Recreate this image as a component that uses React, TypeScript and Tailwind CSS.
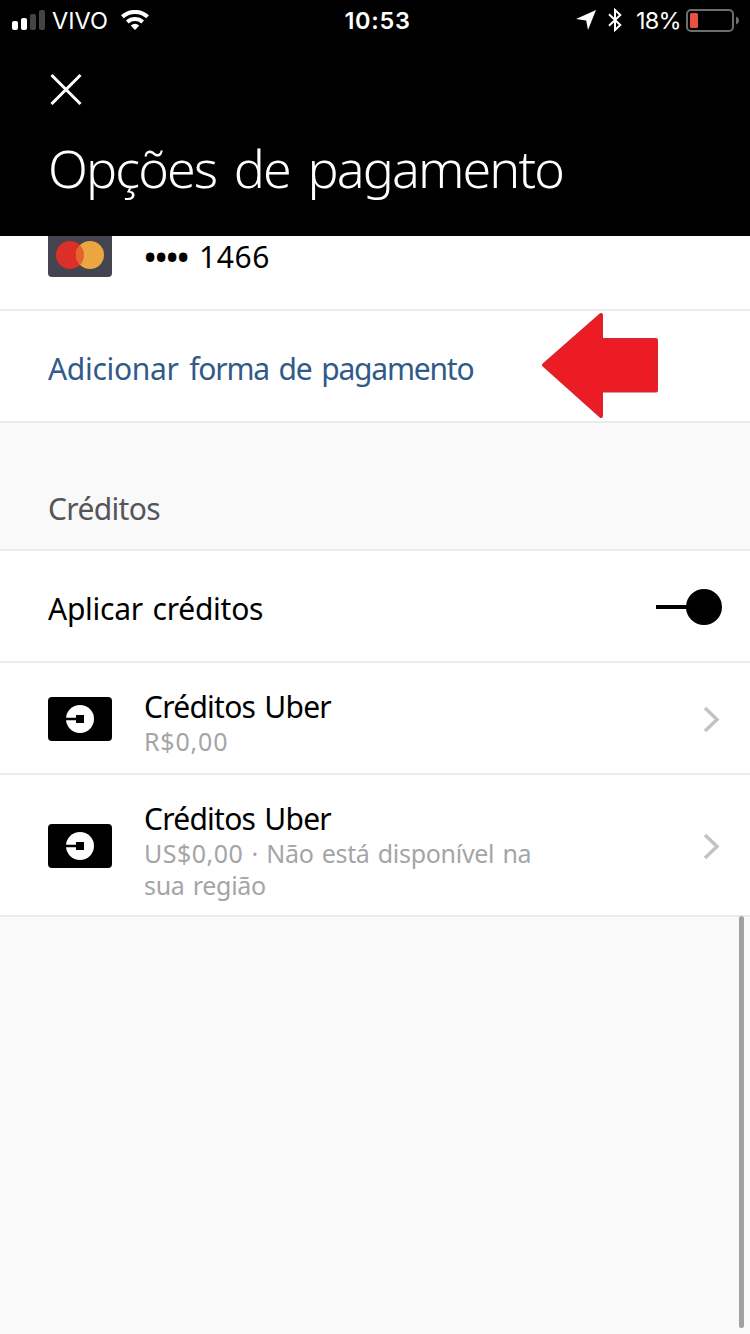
import type { ReactNode } from "react";

function StatusBar() {
  return (
    <div className="grid h-10 grid-cols-3 items-center font-['Inter',sans-serif] text-[23.5px] leading-[38px] text-white">
      <div className="flex items-center pl-3">
        <svg width="34" height="20" viewBox="0 0 34 20">
          <rect x="0" y="11" width="6" height="9" rx="2" fill="#fff" />
          <rect x="9" y="8" width="6" height="12" rx="2" fill="#fff" />
          <rect x="18" y="4" width="6" height="16" rx="2" fill="#444" />
          <rect x="27" y="0" width="6" height="20" rx="2" fill="#444" />
        </svg>
        <span className="ml-1.5 w-[56px] pt-0.5">VIVO</span>
        <svg className="ml-[13px]" width="28" height="20" viewBox="0 0 28 20" fill="none" stroke="#fff" strokeWidth="4">
          <path d="M1.4 6.8a18.6 18.6 0 0 1 25.2 0" />
          <path d="M6.3 12a11.6 11.6 0 0 1 15.4 0" />
          <path d="M9.7 15.4a6.8 6.8 0 0 1 8.6 0L14 20z" fill="#fff" stroke="none" />
        </svg>
      </div>
      <div className="pt-0.5 pl-[5px] text-center font-semibold tracking-[0.7px]">10:53</div>
      <div className="flex items-center justify-end pr-[11px]">
        <svg width="20" height="20" viewBox="0 0 20 20" fill="#fff">
          <path d="M20 0 12 20 10.2 10.400 0 9z" />
        </svg>
        <svg className="ml-3" width="14" height="24" viewBox="0 0 14 24" fill="none" stroke="#fff" strokeWidth="2">
          <path d="M1 6.2 12.3 17 7 22V2l5.3 5L1 17.8" />
        </svg>
        <span className="ml-[14px] w-[45px] pt-0.5 tracking-[-0.8px]">18%</span>
        <svg className="ml-[5px]" width="53" height="24" viewBox="0 0 53 24">
          <rect x="1" y="2" width="46" height="21" rx="4" fill="none" stroke="#6d6d6d" strokeWidth="2" />
          <rect x="4" y="5" width="8" height="15" rx="1.5" fill="#e8503f" />
          <path d="M50 8.5c4 1.5 4 6.500 0 8z" fill="#6d6d6d" />
        </svg>
      </div>
    </div>
  );
}

function Header() {
  return (
    <header className="h-[236px] bg-black text-white">
      <StatusBar />
      <div className="px-12 pt-[33px]">
        <svg className="ml-0.5" width="32" height="32" viewBox="0 0 32 32" stroke="#fff" strokeWidth="3">
          <path d="M1.500 2 30.500 31M30.500 2 1.500 31" />
        </svg>
        <h1 className="mt-[31px] text-[52px] leading-[64px] font-light tracking-[-1.9px] whitespace-nowrap [word-spacing:6px]">
          Opções de pagamento
        </h1>
      </div>
    </header>
  );
}

function CreditCard() {
  return (
    <svg className="shrink-0" width="64" height="44" viewBox="0 0 64 44">
      <rect width="64" height="44" rx="4" fill="#000" />
      <circle cx="32" cy="22" r="14" fill="#fff" />
      <path d="M17 20.800h11V18h8v8h-8v-2.800H17z" fill="#000" />
    </svg>
  );
}

function CreditRow({ className, children }: { className: string; children: ReactNode }) {
  return (
    <div className={`flex border-b-2 border-[#ebebeb] bg-white pl-12 ${className}`}>
      <div className="flex items-center pt-0.5">
        <CreditCard />
      </div>
      <div className="ml-8 w-[420px] pt-6 text-[25px] leading-8 tracking-[-0.3px] text-[#a5a5a8] [word-spacing:2px]">
        <p className="-mb-0.5 text-[30px] leading-10 tracking-[-0.75px] text-black">Créditos Uber</p>
        {children}
      </div>
      <div className="ml-auto flex items-center pt-0.5 pr-[30px]">
        <svg width="17" height="28" viewBox="0 0 17 28" fill="none" stroke="#c3c3c6" strokeWidth="3.500">
          <path d="M2 3 14 14.500 2 26" />
        </svg>
      </div>
    </div>
  );
}

export default function App() {
  return (
    <div className="relative h-[1334px] w-[750px] overflow-hidden bg-[#f9f9f9] font-['Noto_Sans',sans-serif] text-[30px] text-black">
      <Header />

      <div className="flex h-[75px] border-b-2 border-[#ebebeb] bg-white pl-12">
        <svg width="64" height="41" viewBox="0 0 64 41">
          <path d="M0 0h64v37a4 4 0 0 1-4 4H4a4 4 0 0 1-4-4z" fill="#444350" />
          <circle cx="22" cy="19" r="14" fill="#dc2f27" />
          <circle cx="42" cy="19" r="14" fill="#eba63f" />
          <path d="M32 9.200a14 14 0 0 1 0 19.600a14 14 0 0 1 0-19.600z" fill="#e5622f" />
        </svg>
        <div className="ml-8 flex pt-px leading-10">
          <span className="-ml-px w-[56px] text-[38px] leading-[39px] tracking-[-3.3px]">••••</span>
          <span className="tracking-[0.6px]">1466</span>
        </div>
      </div>

      <div className="flex h-[112px] items-center border-b-2 border-[#ebebeb] bg-white pl-12">
        <span className="w-[493px] pt-1 tracking-[-1.2px] whitespace-nowrap text-[#315a89] [word-spacing:3px]">
          <span className="tracking-[-0.3px]">Adicionar </span>forma de pagamento
        </span>
        <svg width="118" height="106" viewBox="0 0 118 106">
          <path
            d="M3 52 60 2v25h55v50.500H60v25.500z"
            fill="#ed1c24"
            stroke="#e31f28"
            strokeWidth="4"
            strokeLinejoin="round"
          />
        </svg>
      </div>

      <h2 className="flex h-[128px] items-end border-b-2 border-[#ebebeb] pb-5 pl-12 leading-10 tracking-[-0.65px] text-[#55555a]">
        Créditos
      </h2>

      <div className="flex h-[112px] items-center justify-between border-b-2 border-[#ebebeb] bg-white pr-7 pl-12">
        <span className="pt-1 tracking-[-0.25px] [word-spacing:2px]">Aplicar créditos</span>
        <div className="flex items-center pt-0.5">
          <div className="h-1 w-[31px] bg-black" />
          <div className="-ml-px size-9 rounded-full bg-black" />
        </div>
      </div>

      <CreditRow className="h-[112px]">
        <p className="tracking-[0.8px]">R$0,00</p>
      </CreditRow>
      <CreditRow className="h-[142px]">
        <p className="-mt-px whitespace-nowrap">
          <span className="tracking-[0.5px]">US$0,00</span> · Não está disponível na
        </p>
        <p>sua região</p>
      </CreditRow>

      <div className="absolute top-[916px] right-1.5 h-[412px] w-[5px] rounded-full bg-[#a0a0a0]" />
    </div>
  );
}
